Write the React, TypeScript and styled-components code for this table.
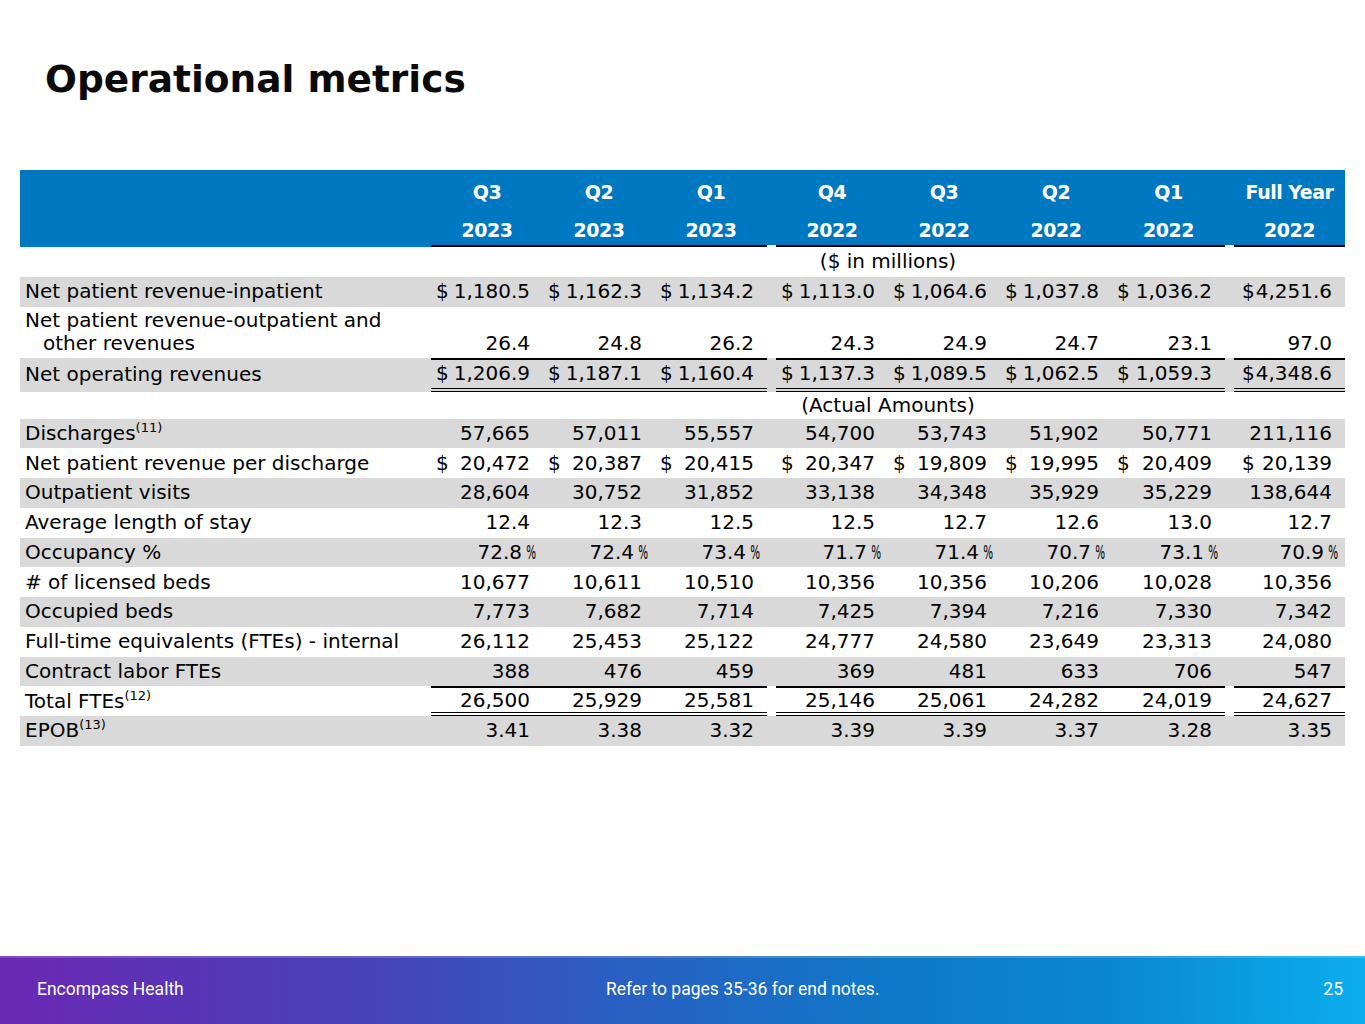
import React from "react";
import styled, { createGlobalStyle, css } from "styled-components";

const GlobalStyle = createGlobalStyle`
  html, body { margin: 0; padding: 0; background: #ffffff; }
  body { font-family: "DejaVu Sans", "Liberation Sans", sans-serif; color: #000; }
`;

const BLUE = "#0078c1";
const GRAY = "#d9d9d9";

const Page = styled.div`
  width: 1365px;
  height: 1024px;
  display: flex;
  flex-direction: column;
  overflow: hidden;
`;

const Main = styled.main`
  flex: 1;
  display: flex;
  flex-direction: column;
`;

const Title = styled.h1`
  margin: 61px 0 0 45px;
  font: 700 37.5px/1 "DejaVu Sans", sans-serif;
  color: #0a0a0a;
`;

const Table = styled.table`
  margin: 71px 0 0 20px;
  width: 1325px;
  table-layout: fixed;
  border-collapse: separate;
  border-spacing: 0;
  font-size: 20px;
  line-height: 23px;
`;

const HeadRow = styled.tr<{ $h: number }>`
  height: ${(p) => p.$h}px;
  background: ${BLUE};
`;

const HeadCell = styled.th<{ $line?: "rule" | "gap" | "none" }>`
  padding: 0;
  color: #fff;
  font: 700 19px/23px "DejaVu Sans", sans-serif;
  letter-spacing: -0.5px;
  text-align: center;
  vertical-align: middle;
  white-space: nowrap;
  ${(p) =>
    p.$line === "rule" &&
    css`
      border-bottom: 2px solid #000;
    `}
  ${(p) =>
    p.$line === "gap" &&
    css`
      border-bottom: 2px solid #fff;
    `}
  ${(p) =>
    p.$line === "none" &&
    css`
      border-bottom: 2px solid ${BLUE};
    `}
`;

const Row = styled.tr<{ $shade?: boolean; $h: number }>`
  height: ${(p) => p.$h}px;
  background: ${(p) => (p.$shade ? GRAY : "#fff")};
`;

const LabelCell = styled.td<{ $bottom?: boolean }>`
  padding: 0 0 0 5px;
  white-space: nowrap;
  vertical-align: ${(p) => (p.$bottom ? "bottom" : "middle")};
  padding-bottom: ${(p) => (p.$bottom ? "3px" : "0")};
`;

const Indent = styled.span`
  display: inline-block;
  padding-left: 18px;
`;

const Sup = styled.sup`
  font-size: 13px;
  line-height: 0;
  vertical-align: 8px;
`;

const ValueCell = styled.td<{
  $top?: boolean;
  $double?: boolean;
  $bottom?: boolean;
  $wide?: boolean;
}>`
  padding: 0 13px 0 ${(p) => (p.$wide ? "8px" : "5px")};
  text-align: right;
  white-space: nowrap;
  vertical-align: ${(p) => (p.$bottom ? "bottom" : "middle")};
  padding-bottom: ${(p) => (p.$bottom ? "3px" : "0")};
  ${(p) =>
    p.$top &&
    css`
      border-top: 2px solid #000;
    `}
  ${(p) =>
    p.$double &&
    css`
      border-bottom: 4px double #000;
    `}
`;

const SpacerCell = styled.td`
  padding: 0;
`;

const SectionCell = styled.td`
  padding: 0;
  text-align: center;
  vertical-align: middle;
`;

const Amount = styled.div`
  display: flex;
  justify-content: space-between;
`;

const Pct = styled.span`
  display: inline-block;
  width: 12px;
  margin-right: -12px;
  padding-left: 8px;
  text-align: left;
  transform: scaleX(0.52);
  transform-origin: left center;
`;

const Footer = styled.footer`
  height: 68px;
  display: grid;
  grid-template-columns: 569px 1fr auto;
  align-items: center;
  padding: 0 22px 0 37px;
  background: linear-gradient(
    90deg,
    #6a28b4 0%,
    #4a3fb9 25%,
    #2a5fc2 45%,
    #0f78c8 65%,
    #0a88d3 82%,
    #0aaeee 100%
  );
  box-shadow: inset 0 2px 0 rgba(255, 255, 255, 0.18);
  color: #fff;
  font: 400 17.5px/1 Roboto, "Liberation Sans", sans-serif;
`;

type Kind = "plain" | "dollar" | "pct";

interface DataRow {
  label: React.ReactNode;
  values: string[];
  kind?: Kind;
  shade?: boolean;
  total?: boolean;
  tall?: boolean;
}

const millions: DataRow[] = [
  {
    label: "Net patient revenue-inpatient",
    values: ["1,180.5", "1,162.3", "1,134.2", "1,113.0", "1,064.6", "1,037.8", "1,036.2", "4,251.6"],
    kind: "dollar",
    shade: true,
  },
  {
    label: (
      <>
        Net patient revenue-outpatient and
        <br />
        <Indent>other revenues</Indent>
      </>
    ),
    values: ["26.4", "24.8", "26.2", "24.3", "24.9", "24.7", "23.1", "97.0"],
    tall: true,
  },
  {
    label: "Net operating revenues",
    values: ["1,206.9", "1,187.1", "1,160.4", "1,137.3", "1,089.5", "1,062.5", "1,059.3", "4,348.6"],
    kind: "dollar",
    shade: true,
    total: true,
  },
];

const actuals: DataRow[] = [
  {
    label: (
      <>
        Discharges<Sup>(11)</Sup>
      </>
    ),
    values: ["57,665", "57,011", "55,557", "54,700", "53,743", "51,902", "50,771", "211,116"],
    shade: true,
  },
  {
    label: "Net patient revenue per discharge",
    values: ["20,472", "20,387", "20,415", "20,347", "19,809", "19,995", "20,409", "20,139"],
    kind: "dollar",
  },
  {
    label: "Outpatient visits",
    values: ["28,604", "30,752", "31,852", "33,138", "34,348", "35,929", "35,229", "138,644"],
    shade: true,
  },
  {
    label: "Average length of stay",
    values: ["12.4", "12.3", "12.5", "12.5", "12.7", "12.6", "13.0", "12.7"],
  },
  {
    label: "Occupancy %",
    values: ["72.8", "72.4", "73.4", "71.7", "71.4", "70.7", "73.1", "70.9"],
    kind: "pct",
    shade: true,
  },
  {
    label: "# of licensed beds",
    values: ["10,677", "10,611", "10,510", "10,356", "10,356", "10,206", "10,028", "10,356"],
  },
  {
    label: "Occupied beds",
    values: ["7,773", "7,682", "7,714", "7,425", "7,394", "7,216", "7,330", "7,342"],
    shade: true,
  },
  {
    label: "Full-time equivalents (FTEs) - internal",
    values: ["26,112", "25,453", "25,122", "24,777", "24,580", "23,649", "23,313", "24,080"],
  },
  {
    label: "Contract labor FTEs",
    values: ["388", "476", "459", "369", "481", "633", "706", "547"],
    shade: true,
  },
  {
    label: (
      <>
        Total FTEs<Sup>(12)</Sup>
      </>
    ),
    values: ["26,500", "25,929", "25,581", "25,146", "25,061", "24,282", "24,019", "24,627"],
    total: true,
  },
  {
    label: (
      <>
        EPOB<Sup>(13)</Sup>
      </>
    ),
    values: ["3.41", "3.38", "3.32", "3.39", "3.39", "3.37", "3.28", "3.35"],
    shade: true,
  },
];

const colWidths = [411, 112, 112, 112, 9, 112, 112, 112, 113, 9, 111];

const quarters = ["Q3", "Q2", "Q1", null, "Q4", "Q3", "Q2", "Q1", null, "Full Year"];
const years = ["2023", "2023", "2023", null, "2022", "2022", "2022", "2022", null, "2022"];

function renderValue(v: string, kind: Kind = "plain") {
  if (kind === "dollar") {
    return (
      <Amount>
        <span>$</span>
        <span>{v}</span>
      </Amount>
    );
  }
  if (kind === "pct") {
    return (
      <>
        {v}
        <Pct>%</Pct>
      </>
    );
  }
  return v;
}

function Cells({ row }: { row: DataRow }) {
  const out: React.ReactNode[] = [];
  row.values.forEach((v, i) => {
    if (i === 3 || i === 7) out.push(<SpacerCell key={`s${i}`} />);
    out.push(
      <ValueCell
        key={i}
        $top={row.total}
        $double={row.total}
        $bottom={row.tall}
        $wide={i === 7}
      >
        {renderValue(v, row.kind)}
      </ValueCell>
    );
  });
  return <>{out}</>;
}

function BodyRow({ row, h }: { row: DataRow; h: number }) {
  return (
    <Row $shade={row.shade} $h={h}>
      <LabelCell $bottom={row.tall}>{row.label}</LabelCell>
      <Cells row={row} />
    </Row>
  );
}

export default function App() {
  return (
    <Page>
      <GlobalStyle />
      <Main>
        <Title>Operational metrics</Title>
        <Table>
          <colgroup>
            {colWidths.map((w, i) => (
              <col key={i} style={{ width: w }} />
            ))}
          </colgroup>
          <thead>
            <HeadRow $h={46}>
              <HeadCell />
              {quarters.map((q, i) => (q === null ? <HeadCell key={i} /> : <HeadCell key={i}>{q}</HeadCell>))}
            </HeadRow>
            <HeadRow $h={31}>
              <HeadCell $line="none" />
              {years.map((y, i) =>
                y === null ? (
                  <HeadCell key={i} $line="gap" />
                ) : (
                  <HeadCell key={i} $line="rule">
                    {y}
                  </HeadCell>
                )
              )}
            </HeadRow>
          </thead>
          <tbody>
            <Row $h={30}>
              <td />
              <SectionCell colSpan={10}>($ in millions)</SectionCell>
            </Row>
            <BodyRow row={millions[0]} h={30} />
            <BodyRow row={millions[1]} h={51} />
            <BodyRow row={millions[2]} h={34} />
            <Row $h={27}>
              <td />
              <SectionCell colSpan={10}>(Actual Amounts)</SectionCell>
            </Row>
            {actuals.map((r, i) => (
              <BodyRow key={i} row={r} h={29.75} />
            ))}
          </tbody>
        </Table>
      </Main>
      <Footer>
        <span>Encompass Health</span>
        <span>Refer to pages 35-36 for end notes.</span>
        <span>25</span>
      </Footer>
    </Page>
  );
}
